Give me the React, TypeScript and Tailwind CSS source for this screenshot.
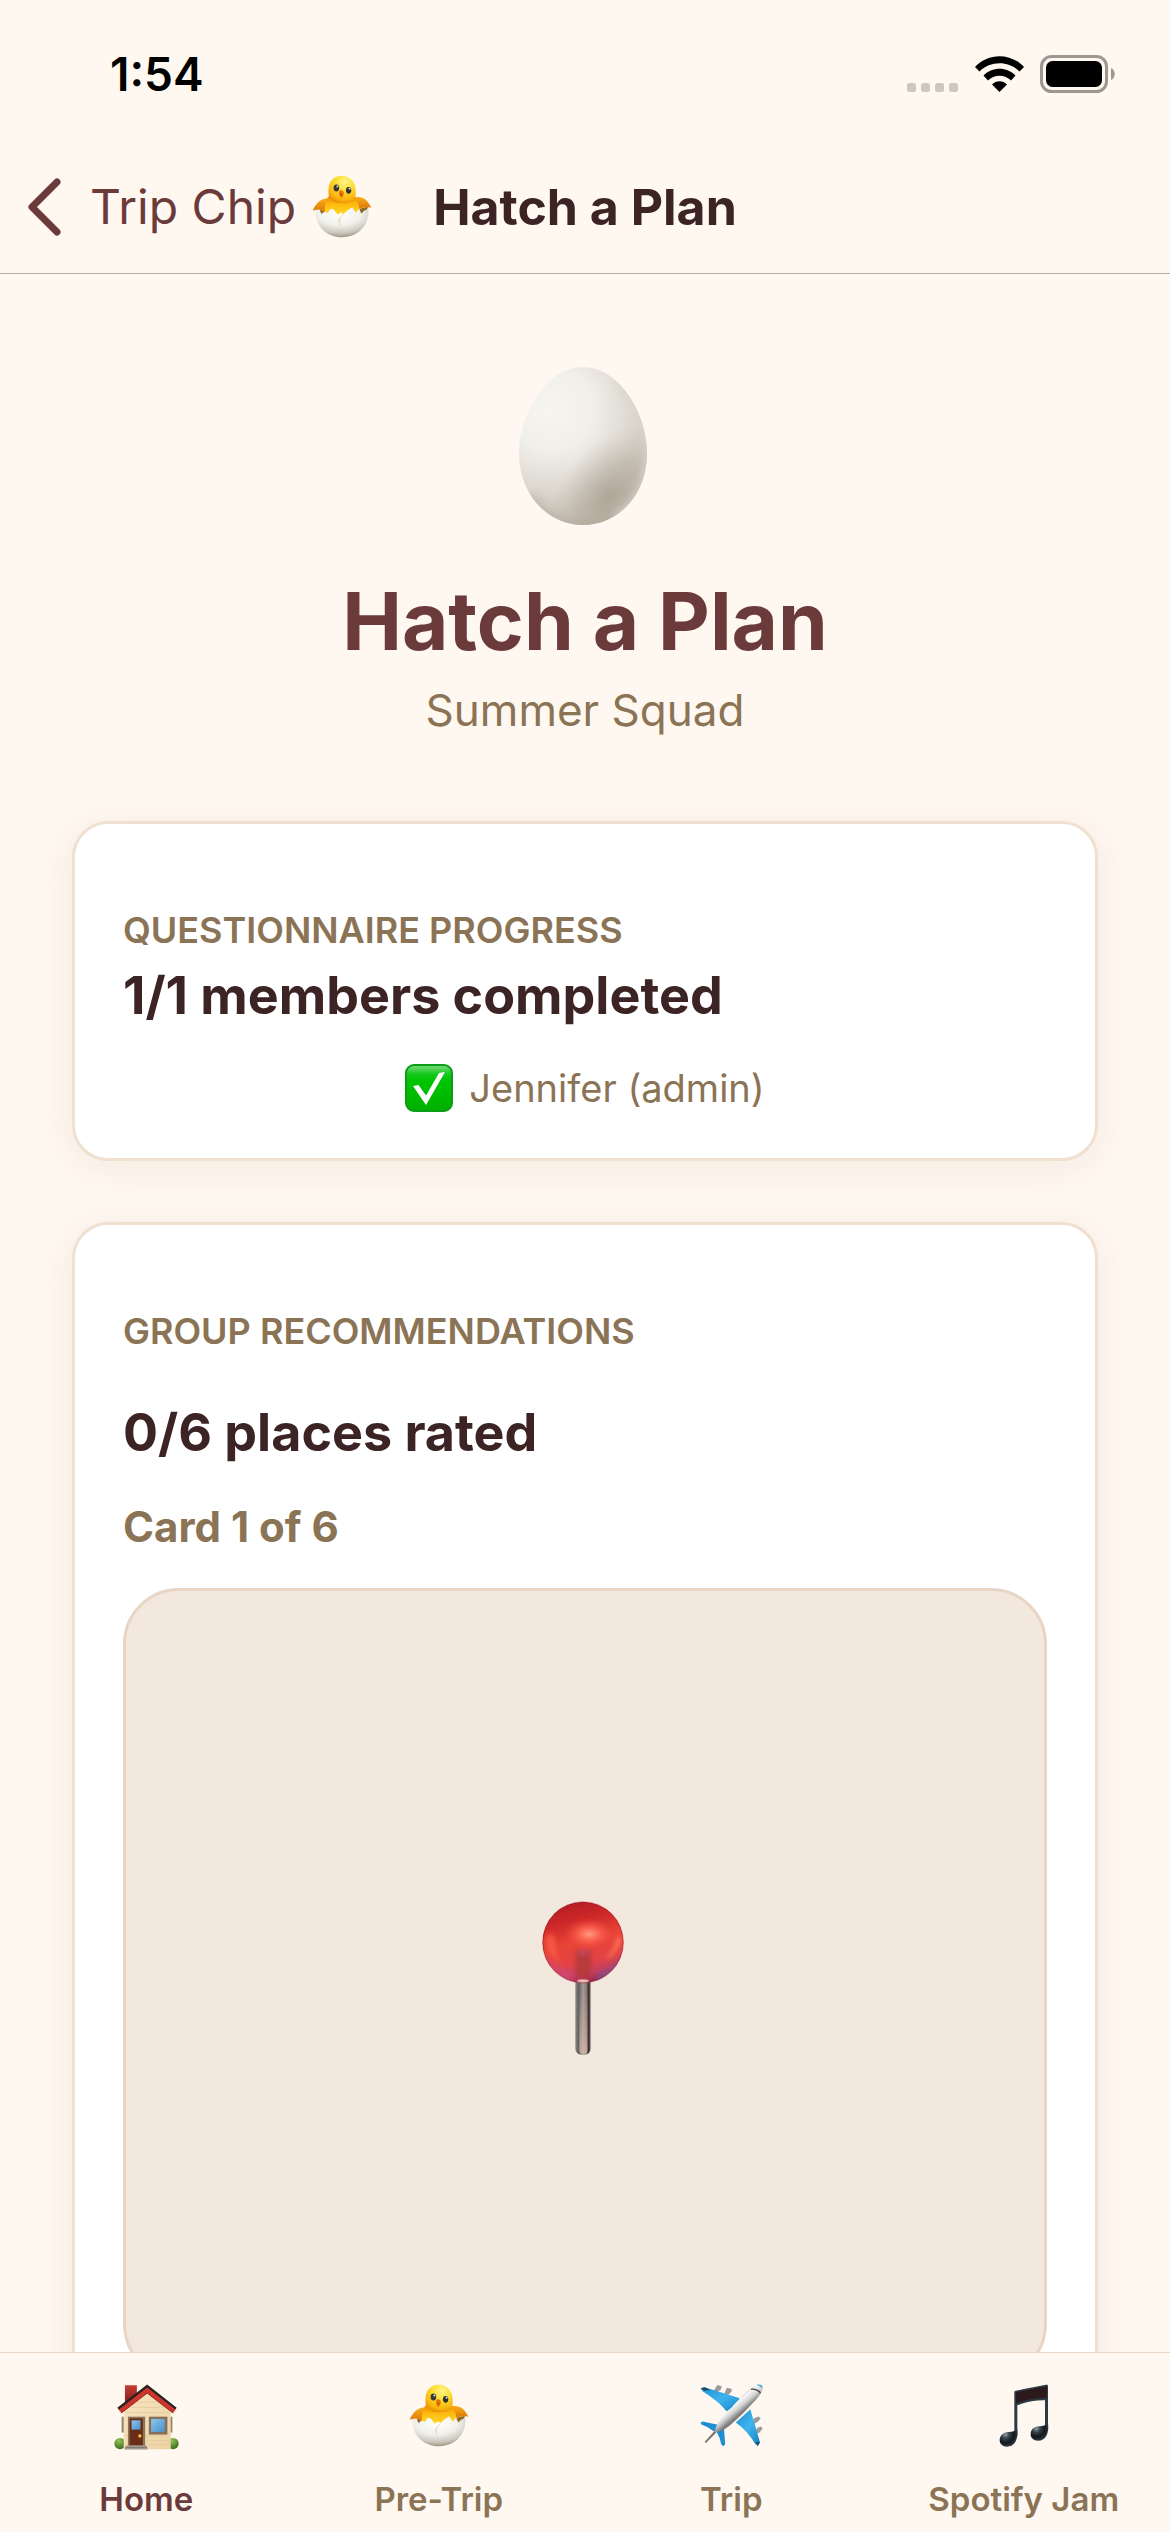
import { useId } from "react";

function Chick({ className }: { className: string }) {
  const id = useId();
  return (
    <svg viewBox="68 76 182 190" className={className} role="img" aria-label="Hatching chick">
      <defs>
        <radialGradient id={`${id}h`} cx="0.6" cy="0.22" r="0.8">
          <stop offset="0" stopColor="#fff48a" />
          <stop offset="0.45" stopColor="#fbdc2c" />
          <stop offset="0.8" stopColor="#fbb50e" />
          <stop offset="1" stopColor="#e88f06" />
        </radialGradient>
        <linearGradient id={`${id}b`} x1="0" y1="0" x2="0" y2="1">
          <stop offset="0" stopColor="#e88a02" />
          <stop offset="0.35" stopColor="#fdb90d" />
          <stop offset="1" stopColor="#ffe531" />
        </linearGradient>
        <linearGradient id={`${id}w`} x1="0" y1="0" x2="0" y2="1">
          <stop offset="0" stopColor="#f9ae1a" />
          <stop offset="1" stopColor="#db7205" />
        </linearGradient>
        <radialGradient id={`${id}s`} cx="0.45" cy="0.2" r="0.82">
          <stop offset="0" stopColor="#ffffff" />
          <stop offset="0.5" stopColor="#f1f0eb" />
          <stop offset="0.8" stopColor="#cbc9bd" />
          <stop offset="1" stopColor="#9a917e" />
        </radialGradient>
      </defs>
      <path d="M88 190 L98 176 L120 182 L106 200Z M212 178 L238 172 L230 194 L214 194Z" fill="#8c6a26" />
      <path d="M122 146 C100 144 82 156 70 184 C82 180 96 178 110 192 L134 186Z" fill={`url(#${id}w)`} />
      <path d="M196 144 C220 138 236 150 248 175 C236 172 222 174 206 180 L190 178Z" fill={`url(#${id}w)`} />
      <path d="M118 140 C110 156 104 172 108 190 L150 208 L212 186 C212 168 206 152 198 140Z" fill={`url(#${id}b)`} />
      <path d="M157 78 C136 78 119 94 118 119 C117 142 122 151 138 158 C152 164 180 162 192 154 C202 146 202 130 199 112 C195 92 180 78 157 78Z" fill={`url(#${id}h)`} />
      <ellipse cx="142" cy="115" rx="8.500" ry="10.500" fill="#383838" />
      <ellipse cx="179" cy="122" rx="8" ry="10.500" fill="#303030" />
      <circle cx="145" cy="110" r="3" fill="#dfe3e6" />
      <circle cx="182" cy="117" r="3" fill="#dfe3e6" />
      <path d="M150 126 C154 120 161 121 164 127 C166 136 160 144 157 144 C154 144 148 134 150 126Z" fill="#ea7408" />
      <path d="M154 132 L160 133 L157 141Z" fill="#a94a05" />
      <path d="M79 182 L90 180 L97 194 L106 186 L116 191 L124 178 L134 180 L146 196 L155 189 L164 194 L176 182 L190 173 L201 190 L210 178 L218 192 L226 184 L239 178 C243 226 210 264 160 264 C108 264 76 226 79 182Z" fill={`url(#${id}s)`} />
      <path d="M164 194 L152 208 L146 218 M152 208 L151 230" fill="none" stroke="#d5cf9c" strokeWidth="2" />
    </svg>
  );
}

function House({ className }: { className: string }) {
  return (
    <svg viewBox="68 70 196 198" className={className} role="img" aria-label="House">
      <defs>
        <linearGradient id="wall" x1="0" y1="0" x2="1" y2="1">
          <stop offset="0" stopColor="#f9e6c4" />
          <stop offset="1" stopColor="#ecd2a2" />
        </linearGradient>
        <linearGradient id="chimney" x1="0" y1="0" x2="0" y2="1">
          <stop offset="0" stopColor="#c83c33" />
          <stop offset="1" stopColor="#7a1a18" />
        </linearGradient>
        <linearGradient id="pane" x1="0" y1="0" x2="1" y2="1">
          <stop offset="0" stopColor="#8cc6ee" />
          <stop offset="1" stopColor="#4a8fcb" />
        </linearGradient>
        <radialGradient id="bush" cx="0.4" cy="0.25" r="0.8">
          <stop offset="0" stopColor="#94c257" />
          <stop offset="1" stopColor="#35691c" />
        </radialGradient>
      </defs>
      <path d="M91 168 h8 v48 h-8Z M236 168 h8 v48 h-8Z" fill="#94826b" />
      <circle cx="86" cy="249" r="17" fill="url(#bush)" />
      <circle cx="246" cy="249" r="17" fill="url(#bush)" />
      <path d="M97 266 V146 L168 86 L239 146 V266Z" fill="url(#wall)" />
      <path d="M134 124 H202 M118 140 H218 M100 156 H236 M100 226 H236 M168 240 H236 M168 253 H236" stroke="#dfc79c" strokeWidth="2" />
      <path d="M101 73 h36 v28 l-36 34Z" fill="url(#chimney)" />
      <path d="M78 141 L168 71 L257 141 L251 149 L168 84 L84 149Z" fill="#262423" />
      <path d="M82 147 L168 80 L254 147 L246 157 L168 97 L90 157Z" fill="#d0352c" />
      <path d="M90 157 L168 97 L246 157" fill="none" stroke="#8f231c" strokeWidth="3" />
      <rect x="110" y="168" width="52" height="88" fill="#8b765c" />
      <rect x="115" y="173" width="40" height="82" fill="#6b2d18" />
      <rect x="121" y="179" width="27" height="28" fill="url(#pane)" />
      <circle cx="146" cy="226" r="5" fill="#f5c542" />
      <path d="M105 255 H166 L170 267 H99Z" fill="#a09a90" />
      <path d="M102 261 H168" stroke="#6f6a62" strokeWidth="2" />
      <rect x="173" y="168" width="56" height="54" fill="#86705a" />
      <rect x="180" y="175" width="41" height="39" fill="url(#pane)" />
    </svg>
  );
}

function Plane({ className }: { className: string }) {
  return (
    <svg viewBox="54 70 190 190" className={className} role="img" aria-label="Airplane">
      <defs>
        <linearGradient id="fuselage" gradientUnits="userSpaceOnUse" x1="148" y1="118" x2="180" y2="156">
          <stop offset="0" stopColor="#9a9a9a" />
          <stop offset="0.35" stopColor="#f7f7f7" />
          <stop offset="0.65" stopColor="#d6d6d6" />
          <stop offset="1" stopColor="#7d7d7d" />
        </linearGradient>
        <linearGradient id="wing" x1="0" y1="0" x2="1" y2="1">
          <stop offset="0" stopColor="#1e8fd0" />
          <stop offset="0.5" stopColor="#3eb4ef" />
          <stop offset="1" stopColor="#1680c0" />
        </linearGradient>
      </defs>
      <g fill="#9c9a9a">
        <path d="M96 90 L106 73 L120 77 L117 86 L108 94Z" />
        <path d="M127 100 L135 81 L150 85 L149 93 L139 103Z" />
        <path d="M212 186 L217 173 L231 168 L237 174 L226 186 L216 190Z" />
        <path d="M221 216 L226 203 L238 198 L243 204 L233 217 L223 220Z" />
      </g>
      <path d="M56 83 L68 80 L172 112 L178 124 L134 152 Q112 124 62 92Z" fill="url(#wing)" />
      <path d="M162 186 L206 146 L214 174 L235 246 L228 257 L220 250 Q198 212 162 186Z" fill="url(#wing)" />
      <path d="M56 186 L62 183 L112 194 L106 210 L94 212 Q78 198 58 192Z" fill="#1c90d3" />
      <path d="M104 214 L126 200 L130 252 L124 258 L118 252 Q114 230 104 214Z" fill="#1c90d3" />
      <path d="M56 83 L68 80 L84 88 L66 90Z M235 246 L228 257 L222 244Z" fill="#1f4863" />
      <path d="M68 245 L101 208 L106 213 L72 248Z" fill="#77716f" />
      <path d="M99 216 C101 196 112 180 132 160 C156 134 184 100 212 80 C224 71 238 70 242 76 C246 86 238 100 224 116 C200 142 168 176 138 200 C122 212 112 214 99 216Z" fill="url(#fuselage)" />
      <path d="M224 73 C236 69 244 74 242 84 Q238 76 224 73Z" fill="#36a7e0" />
      <path d="M208 86 C220 84 234 90 236 98" fill="none" stroke="#404040" strokeWidth="4" />
    </svg>
  );
}

function Notes({ className }: { className: string }) {
  return (
    <svg viewBox="68 70 162 192" className={className} role="img" aria-label="Musical notes">
      <defs>
        <radialGradient id="notehead" cx="0.32" cy="0.3" r="0.75">
          <stop offset="0" stopColor="#93a0a8" />
          <stop offset="0.3" stopColor="#35424b" />
          <stop offset="0.65" stopColor="#12171b" />
          <stop offset="1" stopColor="#36434f" />
        </radialGradient>
      </defs>
      <path d="M120 94 Q120 91 124 90 L215 72 Q221 71 221 77 V206 H212 V119 Q170 118 129 134 V226 H120Z" fill="#2b3a45" />
      <path d="M124 95 L217 77 V112 Q166 112 125 128Z" fill="#2a1a1b" />
      <path d="M129 206 C130 218 130 230 124 242 C118 254 108 258 98 258 C84 258 76 250 76 238 C76 224 88 214 104 214 C114 214 122 212 129 206Z" fill="url(#notehead)" />
      <path d="M221 188 C223 202 222 214 216 226 C210 236 202 240 192 240 C176 240 169 232 169 220 C169 206 180 197 196 197 C206 197 214 195 221 188Z" fill="url(#notehead)" />
    </svg>
  );
}

function Egg() {
  return (
    <svg viewBox="0 0 132 158" className="h-[158px] w-[132px]" role="img" aria-label="Egg">
      <defs>
        <radialGradient id="shell" gradientUnits="userSpaceOnUse" cx="32" cy="42" r="120">
          <stop offset="0" stopColor="#f7f5f0" />
          <stop offset="0.35" stopColor="#f1efea" />
          <stop offset="0.65" stopColor="#dedad2" />
          <stop offset="1" stopColor="#c2baae" />
        </radialGradient>
        <radialGradient id="shade" gradientUnits="userSpaceOnUse" cx="88" cy="132" r="62" gradientTransform="rotate(-52 88 132) scale(1.3 .8) translate(-18 33)">
          <stop offset="0" stopColor="#aaa092" stopOpacity="0.85" />
          <stop offset="0.5" stopColor="#b5aca0" stopOpacity="0.5" />
          <stop offset="1" stopColor="#c8c1b7" stopOpacity="0" />
        </radialGradient>
        <filter id="soft" x="-20%" y="-20%" width="140%" height="140%">
          <feGaussianBlur stdDeviation="4" />
        </filter>
        <clipPath id="outline">
          <path d="M64 0 C101 0 128 48 128 86 C128 128 99 158 64 158 C29 158 0 128 0 86 C0 48 27 0 64 0Z" />
        </clipPath>
      </defs>
      <g clipPath="url(#outline)">
        <rect width="128" height="158" fill="url(#shell)" />
        <rect width="128" height="158" fill="url(#shade)" />
        <path d="M98 16 C118 38 130 62 130 88 C130 116 116 140 96 152" fill="none" stroke="#dcd8cf" strokeWidth="7" filter="url(#soft)" />
        <path d="M12 128 Q34 160 64 160 Q84 160 98 152" fill="none" stroke="#a89e90" strokeWidth="5" opacity="0.6" filter="url(#soft)" />
      </g>
    </svg>
  );
}

function Pin() {
  return (
    <svg viewBox="123 61 258 462" className="h-[154px] w-[86px]" role="img" aria-label="Pin">
      <defs>
        <linearGradient id="needle" x1="0" y1="0" x2="1" y2="0">
          <stop offset="0" stopColor="#8d8883" />
          <stop offset="0.22" stopColor="#5d5f60" />
          <stop offset="0.5" stopColor="#a69b95" />
          <stop offset="0.72" stopColor="#8b7c76" />
          <stop offset="0.88" stopColor="#30272a" />
          <stop offset="1" stopColor="#8a7c78" />
        </linearGradient>
        <linearGradient id="needleTip" x1="0" y1="0" x2="0" y2="1">
          <stop offset="0.2" stopColor="#d9b9aa" stopOpacity="0" />
          <stop offset="1" stopColor="#d9b9aa" stopOpacity="0.75" />
        </linearGradient>
        <linearGradient id="ball" x1="0.3" y1="0" x2="0.55" y2="1">
          <stop offset="0" stopColor="#b01c24" />
          <stop offset="0.25" stopColor="#cf2929" />
          <stop offset="0.5" stopColor="#ea4438" />
          <stop offset="0.75" stopColor="#e24344" />
          <stop offset="0.9" stopColor="#c43d62" />
          <stop offset="1" stopColor="#98284a" />
        </linearGradient>
        <radialGradient id="shine">
          <stop offset="0" stopColor="#ff9c85" />
          <stop offset="0.4" stopColor="#ff6a55" stopOpacity="0.8" />
          <stop offset="1" stopColor="#f0453a" stopOpacity="0" />
        </radialGradient>
        <filter id="ballSoft" x="-50%" y="-50%" width="200%" height="200%">
          <feGaussianBlur stdDeviation="6" />
        </filter>
        <clipPath id="ballClip">
          <circle cx="246" cy="185" r="122" />
        </clipPath>
      </defs>
      <rect x="223" y="290" width="46" height="232" rx="18" fill="url(#needle)" />
      <rect x="235" y="290" width="24" height="230" rx="12" fill="url(#needleTip)" />
      <g clipPath="url(#ballClip)">
        <circle cx="246" cy="185" r="122" fill="url(#ball)" />
        <g filter="url(#ballSoft)">
          <path d="M132 170 Q160 140 164 190 Q160 220 180 246 Q140 230 132 170Z" fill="#ff6a4c" opacity="0.6" />
          <path d="M362 170 Q352 220 310 240 Q345 200 346 170Z" fill="#ff8058" opacity="0.8" />
          <path d="M366 215 Q340 280 280 306 L290 280 Q340 260 366 215Z" fill="#7b5790" opacity="0.75" />
          <path d="M128 225 Q150 280 210 306 L216 270 Q160 260 128 225Z" fill="#cf4a78" opacity="0.7" />
          <rect x="224" y="206" width="46" height="88" rx="10" fill="#b23a3a" opacity="0.85" />
          <ellipse cx="247" cy="215" rx="18" ry="9" fill="#c2475c" />
        </g>
        <ellipse cx="264" cy="160" rx="78" ry="48" fill="url(#shine)" />
        <ellipse cx="246" cy="301" rx="18" ry="5" fill="#f7c4c4" />
      </g>
      <circle cx="246" cy="185" r="121" fill="none" stroke="#8e1620" strokeWidth="3" opacity="0.45" />
    </svg>
  );
}

function CheckMark() {
  return (
    <svg viewBox="0 0 48 48" className="size-12 shrink-0" role="img" aria-label="Completed">
      <defs>
        <linearGradient id="check" x1="0" y1="0" x2="0" y2="1">
          <stop offset="0" stopColor="#7fdd83" />
          <stop offset="0.2" stopColor="#14c81c" />
          <stop offset="0.35" stopColor="#00c400" />
          <stop offset="1" stopColor="#00b000" />
        </linearGradient>
      </defs>
      <rect x="1" y="1" width="46" height="46" rx="8" fill="url(#check)" stroke="#0b9d15" strokeWidth="2" />
      <path d="M8 22 L13.500 21 L21 31.500 L34 9 L40 8 L21 41Z" fill="#fff" />
    </svg>
  );
}

function StatusIcons() {
  return (
    <div className="flex items-center">
      <svg viewBox="0 0 52 36" className="h-9 w-[52px]" aria-hidden="true">
        <g fill="#cdc7c1">
          <rect x="0" y="27" width="9" height="9" rx="2.500" />
          <rect x="14" y="27" width="9" height="9" rx="2.500" />
          <rect x="28" y="27" width="9" height="9" rx="2.500" />
          <rect x="42" y="27" width="9" height="9" rx="2.500" />
        </g>
      </svg>
      <svg viewBox="0 0 49 36" className="ml-4 h-9 w-[49px]" role="img" aria-label="Wi-Fi">
        <path d="M0 11 C13 -3.500 36 -3.500 49 11 L44.500 15.500 C34 4.500 15 4.500 4.500 15.500Z" />
        <path d="M8.500 19.500 C17 10.500 32 10.500 40.500 19.500 L36 24.500 C30 18 19 18 13 24.500Z" />
        <path d="M17 28.500 C21 24 28 24 32 28.500 L24.500 36Z" />
      </svg>
      <svg viewBox="0 0 76 38" className="ml-4 h-[38px] w-[76px]" role="img" aria-label="Battery full">
        <rect x="1.500" y="1.500" width="65" height="35" rx="10" fill="none" stroke="#9c9791" strokeWidth="3" />
        <rect x="6" y="6" width="56" height="26" rx="6.500" />
        <path d="M71 13 C76 15 76 23 71 25Z" fill="#9c9791" />
      </svg>
    </div>
  );
}

const tabs = [
  { label: "Home", Icon: House, size: "h-[66px] w-[65px]", color: "text-[#6b3a3a]" },
  { label: "Pre-Trip", Icon: Chick, size: "h-[63px] w-[60px]", color: "text-[#8b7355]" },
  { label: "Trip", Icon: Plane, size: "h-[63px] w-[63px]", color: "text-[#8b7355]" },
  { label: "Spotify Jam", Icon: Notes, size: "h-[64px] w-[54px]", color: "text-[#8b7355]" },
];

const card =
  "rounded-[36px] border-[3px] border-[#f0e0d0] bg-white px-12 pt-[84px] shadow-[0_6px_36px_rgba(107,58,58,0.08)]";
const cardLabel = "text-[36px] leading-[44px] font-semibold text-[#8b7355] uppercase";
const cardHeading = "text-[52px] leading-[64px] font-bold text-[#3d2424]";

export default function App() {
  return (
    <div className="flex h-screen flex-col bg-[#fff8f0] font-['Inter','Liberation_Sans',sans-serif]">
      <header className="shrink-0 border-b border-[#b3ada8]">
        <div className="flex h-[148px] items-center justify-between pr-[54px] pl-[110px]">
          <time className="text-[46px] leading-[56px] font-semibold text-black">1:54</time>
          <StatusIcons />
        </div>
        <div className="grid h-[125px] grid-cols-[1fr_auto_1fr] items-center pb-2 whitespace-nowrap">
          <a href="#trip" className="flex items-center pl-7 text-[48px] leading-[60px] text-[#6b3a3a]">
            <svg viewBox="0 0 34 58" className="mr-7 h-[58px] w-[34px]" fill="none" stroke="currentColor" strokeWidth="7" strokeLinecap="round" strokeLinejoin="round" aria-hidden="true">
              <path d="M29 4 L4 29 L29 54" />
            </svg>
            <span>Trip Chip</span>
            <Chick className="ml-4 h-[63px] w-[60px]" />
          </a>
          <h2 className="text-[50px] leading-[60px] font-bold text-[#3d2424]">Hatch a Plan</h2>
        </div>
      </header>

      <main className="min-h-0 flex-1 overflow-y-auto px-[72px] [scrollbar-width:none]">
        <section className="flex flex-col items-center pt-[93px] text-center">
          <Egg />
          <h1 className="mt-[46px] text-[80px] leading-[100px] font-bold text-[#6b3a3a]">Hatch a Plan</h1>
          <p className="mt-[11px] text-[44px] leading-[56px] text-[#8b7355]">Summer Squad</p>
        </section>

        <section className={`mt-[83px] pb-[46px] ${card}`}>
          <h3 className={cardLabel}>Questionnaire Progress</h3>
          <p className={`mt-3 ${cardHeading}`}>1/1 members completed</p>
          <div className="mt-9 flex items-center justify-center gap-4 text-[38px] leading-[48px] text-[#8b7355]">
            <CheckMark />
            <span>Jennifer (admin)</span>
          </div>
        </section>

        <section className={`mt-[61px] pb-12 ${card}`}>
          <h3 className={cardLabel}>Group Recommendations</h3>
          <p className={`mt-12 ${cardHeading}`}>0/6 places rated</p>
          <p className="mt-9 text-[42px] leading-[52px] font-bold text-[#8b7355]">Card 1 of 6</p>
          <div className="mt-[35px] flex h-[792px] items-center justify-center rounded-[56px] border-[3px] border-[#e8d5c4] bg-[#f2e8de] pb-3">
            <Pin />
          </div>
        </section>
      </main>

      <nav className="grid shrink-0 grid-cols-4 border-t border-[#e8d5c4] bg-[#fff8f0] pt-[31px] pb-[13px]">
        {tabs.map(({ label, Icon, size, color }) => (
          <a key={label} href={`#${label}`} className={`flex flex-col items-center gap-[29px] text-[33px] leading-[40px] font-semibold whitespace-nowrap ${color}`}>
            <Icon className={size} />
            <span className="mt-auto">{label}</span>
          </a>
        ))}
      </nav>
    </div>
  );
}
